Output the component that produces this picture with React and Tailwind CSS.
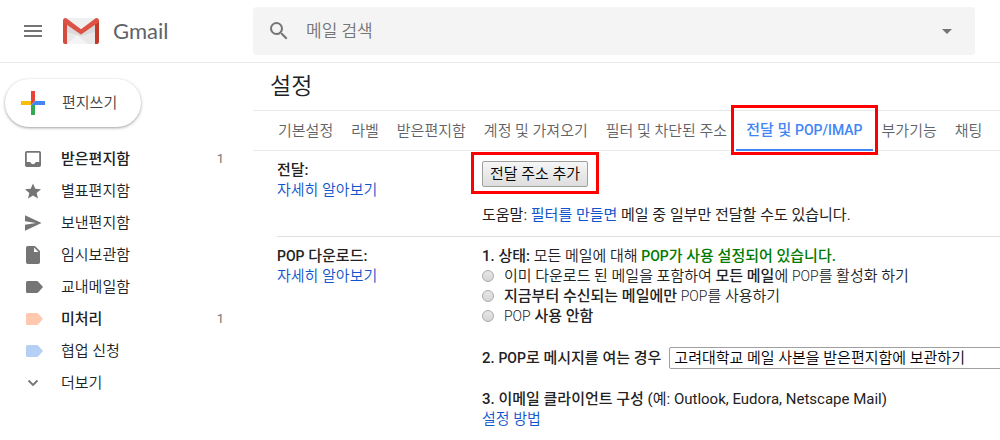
import React from "react";
import { MdArrowDropDown, MdMenu, MdSearch } from "react-icons/md";

const folders = [
  { name: "받은편지함", icon: "inbox", color: "text-[#757575]", count: 1 },
  { name: "별표편지함", icon: "star", color: "text-[#757575]" },
  { name: "보낸편지함", icon: "send", color: "text-[#757575]" },
  { name: "임시보관함", icon: "draft", color: "text-[#757575]" },
  { name: "교내메일함", icon: "label", color: "text-[#757575]" },
  { name: "미처리", icon: "label", color: "text-[#ffc8af]", count: 1 },
  { name: "협업 신청", icon: "label", color: "text-[#b6cff5]" },
];

const icons = {
  inbox: (
    <path
      fillRule="evenodd"
      d="M3.8 2h12.4A1.8 1.8 0 0 1 18 3.8v12.4a1.8 1.8 0 0 1-1.8 1.8H3.8A1.8 1.8 0 0 1 2 16.2V3.8A1.8 1.8 0 0 1 3.8 2ZM3.8 3.8v9.2h3.4a2.9 2.9 0 0 0 5.6 0h3.4V3.8Z"
    />
  ),
  star: <path d="M10 2.5 12.3 7.7 18 8.2l-4.3 3.8 1.3 5.5-5-2.9-5 2.9 1.3-5.5L2 8.2l5.7-.5Z" />,
  send: <path d="M2 2.3 18.5 10 2 17.7v-6L13 10 2 8.3Z" />,
  draft: (
    <path
      fillRule="evenodd"
      d="M4.8 1H12l5 5v11.2a1.8 1.8 0 0 1-1.8 1.8H4.8A1.8 1.8 0 0 1 3 17.2V2.8A1.8 1.8 0 0 1 4.8 1ZM11 2.5V7h4.5Z"
    />
  ),
  label: (
    <path d="M4.5 4h9.3c.6 0 1.1.3 1.5.7L20 10l-4.7 5.3c-.4.4-.9.7-1.5.7H4.5A1.5 1.5 0 0 1 3 14.5v-9A1.5 1.5 0 0 1 4.5 4Z" />
  ),
  more: <path d="m5.5 7.5 4.5 4.5 4.5-4.5" fill="none" stroke="currentColor" strokeWidth="1.8" />,
};

const tabs = [
  { name: "기본설정" },
  { name: "라벨" },
  { name: "받은편지함" },
  { name: "계정 및 가져오기" },
  { name: "필터 및 차단된 주소" },
  { name: "전달 및", latin: "POP/IMAP", active: true },
  { name: "부가기능" },
  { name: "채팅" },
  { name: "오프라인" },
];

// Latin words run one size smaller than the hangul around them
const En = ({ children }) => <span className="text-sm leading-5">{children}</span>;

const Icon = ({ name, color }) => (
  <svg viewBox="0 0 20 20" fill="currentColor" className={`size-5 shrink-0 ${color}`}>
    {icons[name]}
  </svg>
);

const Logo = () => (
  <svg viewBox="0 0 36 26" className="h-[26px] w-9">
    <path d="M2 0h32v26H2Z" fill="#e9e9e9" />
    <path d="M4 6 18 16 32 6v8L18 18 4 14Z" fill="#dadada" />
    <path d="M4 26 14 17l4 3.5L25 26Z" fill="#f4f4f4" />
    <path d="M4 0 18 11 32 0Z" fill="#f0f0f0" />
    <path d="M0 2.5 4 5v21H2a2 2 0 0 1-2-2Z" fill="#d54b3d" />
    <path d="M36 2.5 32 5v21h2a2 2 0 0 0 2-2Z" fill="#c0392b" />
    <path d="M0 2.5C0 .4 2.3-.6 4 .7l14 10.5L32 .7c1.7-1.3 4-.3 4 1.8 0 1-.4 1.9-1.3 2.5L18 16.5 1.3 5C.4 4.4 0 3.5 0 2.5Z" fill="#de5145" />
  </svg>
);

const Plus = () => (
  <svg viewBox="0 0 24 24" className="size-6">
    <path d="M10 0h4v10l-4 4Z" fill="#ea4335" />
    <path d="M0 10h10v4H0Z" fill="#fbbc05" />
    <path d="M10 14h4v10h-4Z" fill="#34a853" />
    <path d="M14 10h10v4H10Z" fill="#4285f4" />
  </svg>
);

const Header = () => (
  <header className="flex h-[63px] items-center border-b border-[#ebebeb] pr-[25px]">
    <div className="flex w-[253px] shrink-0 items-center pl-[21px]">
      <button aria-label="기본 메뉴" className="mr-[18px] text-[#757575]">
        <MdMenu size={24} />
      </button>
      <Logo />
      <span className="ml-[14px] font-[Lato,sans-serif] text-[22px] leading-6 font-normal text-[#5f6368]">
        Gmail
      </span>
    </div>
    <form className="flex h-12 flex-1 items-center rounded bg-[#f4f4f4] pr-4 pl-[14px]">
      <button type="button" aria-label="검색" className="text-[#757575]">
        <MdSearch size={24} />
      </button>
      <input
        type="text"
        aria-label="메일 검색"
        placeholder="메일 검색"
        className="ml-[15px] min-w-0 flex-1 bg-transparent text-[17px] leading-6 outline-none placeholder:text-[#757575]"
      />
      <button type="button" aria-label="검색 옵션" className="text-[#757575]">
        <MdArrowDropDown size={24} />
      </button>
    </form>
  </header>
);

const Sidebar = () => (
  <aside className="w-[253px] shrink-0 pt-4 text-[#202124]">
    <button className="ml-[5px] flex h-12 items-center gap-[17px] rounded-full bg-white pr-6 pl-4 text-[#3c4043] shadow-[0_1px_3px_rgba(60,64,67,0.5)]">
      <Plus />
      편지쓰기
    </button>
    <nav className="mt-4">
      {folders.map(({ name, icon, color, count }) => (
        <a key={name} href="#" className="flex h-8 items-center pr-[29px] pl-[23px]">
          <Icon name={icon} color={color} />
          <span className={`ml-[18px] flex-1 ${count ? "font-medium" : ""}`}>{name}</span>
          {count && <span className="text-[13px] font-normal text-[#757575]">{count}</span>}
        </a>
      ))}
      <button className="flex h-8 items-center pl-[23px]">
        <Icon name="more" color="text-[#757575]" />
        <span className="ml-[18px]">더보기</span>
      </button>
    </nav>
  </aside>
);

const Tabs = () => (
  <nav className="flex h-10 border-b border-[#ebebeb] pl-4 text-[#5f6368]">
    {tabs.map(({ name, latin, active }) => (
      <a
        key={name}
        href="#"
        className={`relative flex h-10 shrink-0 items-center whitespace-nowrap ${
          active ? "border-b-2 border-[#4285f4] px-[10px] font-medium text-[#4285f4]" : "px-[9px]"
        }`}
      >
        <span>
          {name} {latin && <En>{latin}</En>}
        </span>
        {active && (
          <span className="pointer-events-none absolute -inset-x-[5px] -top-[6px] -bottom-[6px] z-10 border-3 border-[#ff0000]" />
        )}
      </a>
    ))}
  </nav>
);

const Section = ({ title, children }) => (
  <section className="ml-6 flex border-b border-[#e0e0e0] pt-[9px]">
    <div className="w-[205px] shrink-0">
      <h2 className="font-medium">{title}</h2>
      <a href="#" className="text-[#1155cc]">
        자세히 알아보기
      </a>
    </div>
    <div className="min-w-0 flex-1 whitespace-nowrap">{children}</div>
  </section>
);

const Option = ({ id, children }) => (
  <div className="flex items-center gap-[10px]">
    <input
      type="radio"
      name="pop"
      id={id}
      className="size-3 appearance-none rounded-full border border-[#aaa] bg-linear-to-b from-[#e6e6e6] to-[#d6d6d6] checked:bg-[#4285f4]"
    />
    <label htmlFor={id}>{children}</label>
  </div>
);

const App = () => (
  <div className="overflow-hidden bg-white font-[Roboto,'Noto_Sans_CJK_KR',sans-serif] text-[15px] leading-5 font-[350] text-[#222]">
    <Header />
    <div className="flex">
      <Sidebar />
      <main className="min-w-0 flex-1">
        <h1 className="flex h-12 items-center border-b border-[#ebebeb] pl-[17px] text-[23px] text-[#202124]">
          설정
        </h1>
        <Tabs />
        <Section title="전달:">
          <div className="relative mt-px inline-block">
            <button className="block rounded-xs border border-[#a0a0a0] bg-linear-to-b from-[#f6f6f6] to-[#dddddd] px-[7px] py-0.5 text-black">
              전달 주소 추가
            </button>
            <span className="pointer-events-none absolute -inset-x-[11px] -top-[9px] -bottom-[7px] border-3 border-[#ff0000]" />
          </div>
          <p className="mt-[18px] mb-[11px] font-normal">
            도움말:{" "}
            <a href="#" className="text-[#1155cc]">
              필터를 만들면
            </a>{" "}
            메일 중 일부만 전달할 수도 있습니다.
          </p>
        </Section>
        <Section title={<><En>POP</En> 다운로드:</>}>
          <p>
            <b className="font-medium">1. 상태:</b> 모든 메일에 대해{" "}
            <b className="font-medium text-[#007a00]">
              <En>POP</En>가 사용 설정되어 있습니다.
            </b>
          </p>
          <Option id="pop-all">
            이미 다운로드 된 메일을 포함하여 <b className="font-medium">모든 메일</b>에 <En>POP</En>를 활성화 하기
          </Option>
          <Option id="pop-now">
            <b className="font-medium">지금부터 수신되는 메일에만</b> <En>POP</En>를 사용하기
          </Option>
          <Option id="pop-off">
            <En>POP</En> <b className="font-medium">사용 안함</b>
          </Option>
          <div className="mt-[21px] flex items-center gap-2">
            <label htmlFor="pop-action" className="font-medium">
              2. <En>POP</En>로 메시지를 여는 경우
            </label>
            <select
              id="pop-action"
              className="h-[22px] w-[420px] shrink-0 appearance-none rounded-xs border border-[#a0a0a0] bg-white px-1 text-black"
            >
              <option>고려대학교 메일 사본을 받은편지함에 보관하기</option>
            </select>
          </div>
          <p className="mt-5 font-normal">
            <b className="font-medium">3. 이메일 클라이언트 구성</b> (예: Outlook, Eudora, Netscape Mail)
          </p>
          <p className="mb-3">
            <a href="#" className="text-[#1155cc]">
              설정 방법
            </a>
          </p>
        </Section>
      </main>
    </div>
  </div>
);

export default App;
